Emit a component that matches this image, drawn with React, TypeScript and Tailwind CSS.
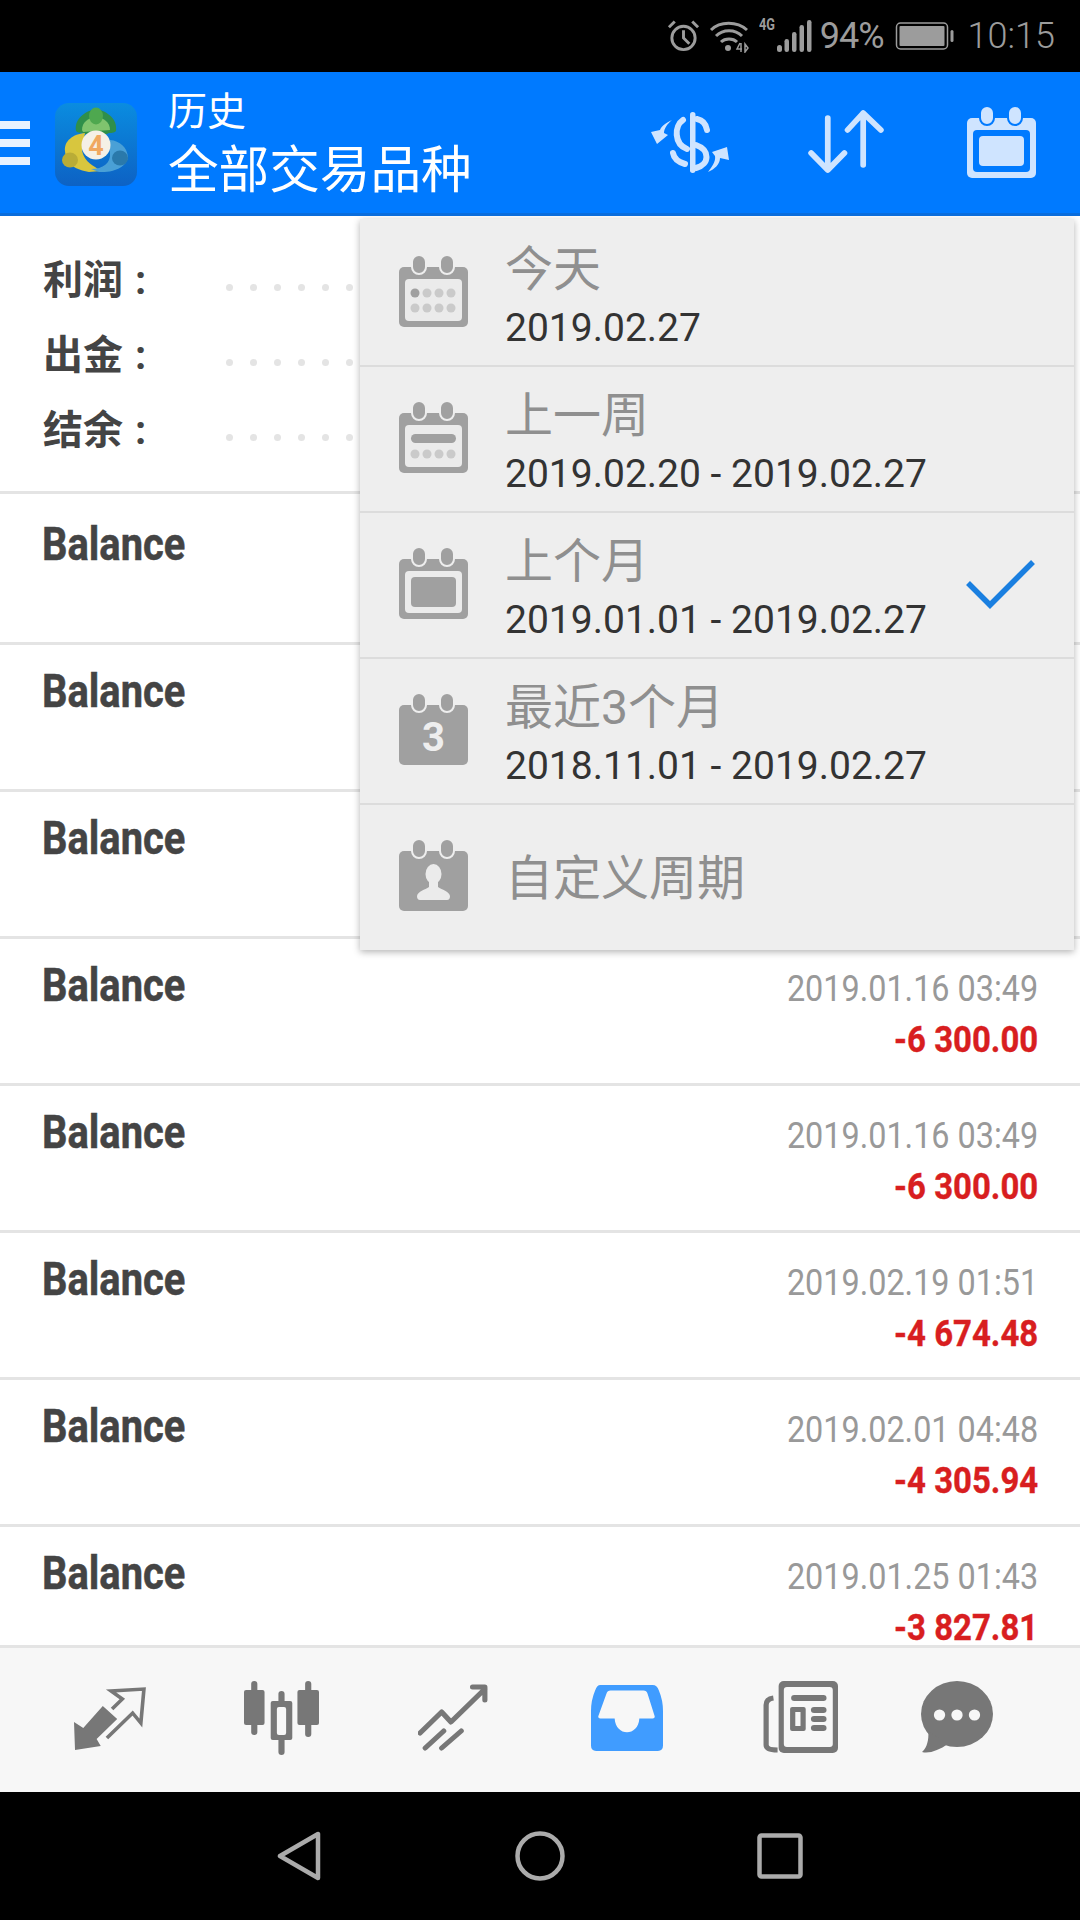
import { ReactNode } from "react";

const rows = [
  { date: "", amount: "" },
  { date: "", amount: "" },
  { date: "", amount: "" },
  { date: "2019.01.16 03:49", amount: "-6 300.00" },
  { date: "2019.01.16 03:49", amount: "-6 300.00" },
  { date: "2019.02.19 01:51", amount: "-4 674.48" },
  { date: "2019.02.01 04:48", amount: "-4 305.94" },
  { date: "2019.01.25 01:43", amount: "-3 827.81" },
];

function CalendarBase({ fill, ring, children }: { fill: string; ring: string; children?: ReactNode }) {
  return (
    <svg width="69" height="71" viewBox="0 0 69 71" className="shrink-0">
      <rect x="0" y="11" width="69" height="60" rx="5" fill={fill} />
      <rect x="13" y="-1" width="14" height="19" rx="7" fill={fill} stroke={ring} strokeWidth="2" />
      <rect x="41" y="-1" width="14" height="19" rx="7" fill={fill} stroke={ring} strokeWidth="2" />
      {children}
    </svg>
  );
}

function DotRow({ y, first }: { y: number; first?: boolean }) {
  return (
    <>
      <circle cx="16" cy={y} r="4.5" fill={first ? "#a0a0a0" : "#cacaca"} />
      <circle cx="28" cy={y} r="4.5" fill="#cacaca" />
      <circle cx="40" cy={y} r="4.5" fill="#cacaca" />
      <circle cx="52" cy={y} r="4.5" fill="#cacaca" />
    </>
  );
}

function TodayIcon() {
  return (
    <CalendarBase fill="#a0a0a0" ring="#eeeeee">
      <rect x="6" y="23" width="57" height="42" rx="4" fill="#ebebeb" />
      <DotRow y={37} first />
      <DotRow y={52} />
    </CalendarBase>
  );
}

function WeekIcon() {
  return (
    <CalendarBase fill="#a0a0a0" ring="#eeeeee">
      <rect x="6" y="23" width="57" height="42" rx="4" fill="#ebebeb" />
      <rect x="12" y="32" width="45" height="9" rx="4.5" fill="#a0a0a0" />
      <DotRow y={52} />
    </CalendarBase>
  );
}

function MonthIcon({ fill = "#a0a0a0", ring = "#eeeeee", win = "#ebebeb" }: { fill?: string; ring?: string; win?: string }) {
  return (
    <CalendarBase fill={fill} ring={ring}>
      <rect x="6" y="23" width="57" height="42" rx="4" fill={win} />
      <rect x="12" y="29" width="45" height="30" rx="4" fill={fill} />
    </CalendarBase>
  );
}

function ThreeMonthsIcon() {
  return (
    <CalendarBase fill="#a0a0a0" ring="#eeeeee">
      <text x="34.5" y="57" textAnchor="middle" fontFamily="Roboto" fontWeight="700" fontSize="40" fill="#eeeeee">
        3
      </text>
    </CalendarBase>
  );
}

function CustomIcon() {
  return (
    <CalendarBase fill="#a0a0a0" ring="#eeeeee">
      <ellipse cx="34.5" cy="34" rx="8" ry="10" fill="#ebebeb" />
      <path d="M30 42 L30 47 C26 50 19 51 18 56 Q18 60 21 60 L48 60 Q51 60 51 56 C50 51 43 50 39 47 L39 42 Z" fill="#ebebeb" />
    </CalendarBase>
  );
}

function MenuItem({ icon, title, date, checked }: { icon: ReactNode; title: string; date: string; checked?: boolean }) {
  return (
    <div className="h-[146px] flex items-start pl-[39px] pt-[20px] border-b-2 border-[#dcdcdc]">
      <div className="mt-[15px] mr-[37px]">{icon}</div>
      <div>
        <div className="text-[48px] leading-[58px] text-[#8f8f8f]">{title}</div>
        <div className="text-[39px] leading-[58px] text-[#333333]">{date}</div>
      </div>
      {checked && (
        <svg width="70" height="50" viewBox="0 0 70 50" className="ml-auto mr-[38px] mt-[26px]" fill="none" stroke="#1a7fe0" strokeWidth="5.5">
          <path d="M2 24 L24 46 L67 3" />
        </svg>
      )}
    </div>
  );
}

function DateMenu() {
  return (
    <div className="absolute left-[360px] top-[3px] w-[714px] pt-[2px] bg-[#eeeeee] shadow-[0_2px_7px_rgba(0,0,0,0.3)]">
      <MenuItem icon={<TodayIcon />} title="今天" date="2019.02.27" />
      <MenuItem icon={<WeekIcon />} title="上一周" date="2019.02.20 - 2019.02.27" />
      <MenuItem icon={<MonthIcon />} title="上个月" date="2019.01.01 - 2019.02.27" checked />
      <MenuItem icon={<ThreeMonthsIcon />} title="最近3个月" date="2018.11.01 - 2019.02.27" />
      <div className="h-[145px] flex items-center pl-[39px]">
        <div className="mb-[4px]">
          <CustomIcon />
        </div>
        <div className="ml-[37px] mt-[2px] text-[48px] leading-[60px] text-[#8f8f8f]">自定义周期</div>
      </div>
    </div>
  );
}

function StatusBar() {
  return (
    <div className="h-[72px] bg-black flex items-center justify-end pr-[25px] text-[#9c9c9c] shrink-0">
      <svg width="33" height="34" viewBox="0 0 34 34" fill="none" stroke="#9c9c9c" strokeWidth="3" className="mr-[9px]">
        <circle cx="17" cy="19" r="12" />
        <path d="M17 11 V19 L23 25 M2 8 L8 2 M32 8 L26 2" />
      </svg>
      <svg width="40" height="34" viewBox="0 0 40 34" fill="none" stroke="#9c9c9c" strokeWidth="3" className="mr-[10px]">
        <path d="M2 11 C11 2 28 2 38 11 M7 17 C14 10 26 10 33 17 M12 23 C16 19 24 19 28 23" />
        <circle cx="19" cy="29" r="3" fill="#9c9c9c" stroke="none" />
        <path d="M31 24 L28 30 H33 M32 24 V33 M36 25 V33 L39 29 Z" strokeWidth="1.5" />
      </svg>
      <div className="w-[18px] h-[30px] text-[17px] font-bold leading-[16px] self-start mt-[16px] scale-x-75 origin-left">4G</div>
      <svg width="35" height="34" viewBox="0 0 35 34" fill="#9c9c9c" className="mr-[8px]">
        <rect x="0" y="26" width="5" height="7" rx="2.5" />
        <rect x="7.5" y="20" width="4.5" height="13" rx="2.2" />
        <rect x="15" y="13" width="4.5" height="20" rx="2.2" />
        <rect x="22.5" y="6" width="4.5" height="27" rx="2.2" />
        <rect x="30" y="1" width="4.5" height="32" rx="2.2" />
      </svg>
      <div className="text-[36px] leading-[40px] tracking-[-1px] mr-[11px]">94%</div>
      <svg width="61" height="30" viewBox="0 0 60 30" className="mr-[12px]">
        <rect x="1" y="2" width="51" height="26" rx="4" fill="none" stroke="#9c9c9c" strokeWidth="1.5" />
        <rect x="4" y="5" width="45" height="20" rx="1" fill="#9c9c9c" />
        <rect x="55" y="9" width="3" height="12" rx="1.5" fill="#9c9c9c" />
      </svg>
      <div className="text-[36px] leading-[40px] font-light">10:15</div>
    </div>
  );
}

function Logo() {
  return (
    <svg width="82" height="83" viewBox="0 0 82 83" className="shrink-0">
      <defs>
        <linearGradient id="logoBg" x1="0" y1="0" x2="0" y2="1">
          <stop offset="0" stopColor="#0a8ce0" />
          <stop offset="1" stopColor="#0d62c4" />
        </linearGradient>
      </defs>
      <rect width="82" height="83" rx="14" fill="url(#logoBg)" />
      <path d="M21 28 C19 16 30 8 41 6 C52 8 63 16 61 28 C58 31 54 29 52 31 L30 31 C28 29 24 31 21 28 Z" fill="#2f8f4a" />
      <path d="M27 27 C27 19 33 15 41 14 C49 15 55 19 55 27 L28 29 Z" fill="#7fc46e" />
      <ellipse cx="41" cy="13" rx="7" ry="8.5" fill="#4ea84f" />
      <path d="M30 30 C18 31 9 38 10 48 C11 62 22 67 34 69 L46 68 C38 62 30 60 27 48 Z" fill="#d8c63e" />
      <ellipse cx="15" cy="57" rx="8" ry="7.5" fill="#b9ac37" />
      <path d="M55 37 C65 38 72 44 73 54 C72 63 60 70 44 69 L36 66 C48 66 56 60 55 50 Z" fill="#4aa0d6" />
      <ellipse cx="65" cy="55" rx="8" ry="7.5" fill="#2a79ab" />
      <circle cx="41" cy="42" r="14.5" fill="#f5f0e6" />
      <text x="41" y="52" textAnchor="middle" fontFamily="Roboto" fontWeight="700" fontSize="27" fill="#f0a860">
        4
      </text>
    </svg>
  );
}

function AppBar() {
  return (
    <div className="h-[144px] bg-[#007aff] border-b-[3px] border-[#0a6ddc] flex items-center shrink-0 text-white">
      <div className="w-[30px] flex flex-col gap-[10px] shrink-0">
        <div className="h-[8px] bg-[#e8f2ff]" />
        <div className="h-[8px] bg-[#e8f2ff]" />
        <div className="h-[8px] bg-[#e8f2ff]" />
      </div>
      <div className="ml-[25px] mt-[3px]">
        <Logo />
      </div>
      <div className="ml-[31px] pt-[3px]">
        <div className="text-[39px] leading-[50px]">历史</div>
        <div className="mt-[3px] text-[50.6px] leading-[62px]">全部交易品种</div>
      </div>
      <div className="ml-auto mr-[44px] flex items-center">
        <svg width="80" height="61" viewBox="0 0 80 61" fill="none" stroke="#cfe4ff" strokeWidth="6" strokeLinecap="round">
          <rect x="40" y="0" width="5.5" height="61" rx="2.7" fill="#cfe4ff" stroke="none" />
          <path d="M33 8 C24 14 24 32 37 37 M47 7 C52 8 56 12 57 18 M46 33 C60 38 60 52 46 56 M23 41 C24 47 28 50 35 52" />
          <path d="M22 8 C15 11 11 15 10 18 L1 20 L7 32 L18 23 L14 21 C14 17 17 12 22 8 Z M58 60 C65 57 70 52 70 46 L79 48 L77 35 L62 40 L65 44 C66 49 62 55 58 60 Z" fill="#cfe4ff" stroke="none" />
        </svg>
        <svg width="76" height="65" viewBox="0 0 73 65" preserveAspectRatio="none" fill="none" stroke="#cfe4ff" strokeWidth="5.5" strokeLinecap="round" strokeLinejoin="round" className="ml-[78px]">
          <path d="M19 8 V60 M3 43 L19 60 L35 43 M53 3 V55 M38 20 L53 3 L70 20" />
        </svg>
        <div className="ml-[83px]">
          <MonthIcon fill="#cfe4ff" ring="#007aff" win="#007aff" />
        </div>
      </div>
    </div>
  );
}

function Summary() {
  const labels = ["利润", "出金", "结余"];
  const dots = Array.from({ length: 34 });
  return (
    <div className="h-[278px] border-b-[3px] border-[#e4e4e4] pt-[27px] pl-[43px] overflow-hidden">
      {labels.map((label) => (
        <div key={label} className="h-[75px] flex items-center">
          <div className="w-[183px] shrink-0 text-[40px] font-bold text-[#444444] leading-[75px]">
            {label}
            <span className="ml-[12px]">:</span>
          </div>
          <div className="flex gap-[17px] pt-[14px]">
            {dots.map((_, i) => (
              <div key={i} className="w-[7px] h-[7px] rounded-full bg-[#e4e4e4]" />
            ))}
          </div>
        </div>
      ))}
    </div>
  );
}

function Row({ date, amount }: { date: string; amount: string }) {
  return (
    <div className="h-[147px] shrink-0 border-b-[3px] border-[#e4e4e4] flex justify-between pl-[42px] pr-[42px]">
      <div className="mt-[18px] text-[46px] leading-[56px] font-bold text-[#444444] [-webkit-text-stroke:0.5px_#444444] scale-x-[0.867] origin-left">Balance</div>
      <div className="mt-[25px] text-right">
        <div className="text-[37px] leading-[50px] text-[#999999] scale-x-[0.875] origin-right whitespace-nowrap">{date}</div>
        <div className="text-[37px] leading-[52px] font-bold text-[#d81e20] [-webkit-text-stroke:0.4px_#d81e20] scale-x-[0.89] origin-right whitespace-nowrap">{amount}</div>
      </div>
    </div>
  );
}

function TabBar() {
  return (
    <div className="h-[147px] shrink-0 bg-[#f7f7f7] border-t-[3px] border-[#e4e4e4] flex items-start pt-[36px] pl-[74px]">
      <svg width="72" height="64" viewBox="0 0 70 64" preserveAspectRatio="none" className="mt-[3px] shrink-0">
        <path d="M0 35 L9 41 L28 19 L42 32 L22 52 L26 59 L1 63 Z" fill="#777777" />
        <path d="M37 22 L47 12 L36 4 L68 2 L65 36 L57 26 L32 51" fill="none" stroke="#777777" strokeWidth="3.5" />
      </svg>
      <svg width="75" height="74" viewBox="0 0 73 74" preserveAspectRatio="none" fill="#777777" className="ml-[98px] -mt-[3px] shrink-0">
        <rect x="7" y="0" width="6" height="54" rx="3" />
        <rect x="0" y="9" width="20" height="35" rx="2" />
        <rect x="33.5" y="10" width="6" height="64" rx="3" />
        <rect x="26" y="20" width="21" height="39" rx="2" />
        <rect x="32" y="26" width="9" height="28" rx="2" fill="#f7f7f7" />
        <rect x="59.5" y="0" width="6" height="56" rx="3" />
        <rect x="52" y="9" width="21" height="35" rx="2" />
      </svg>
      <svg width="71" height="67" viewBox="0 0 69 67" preserveAspectRatio="none" fill="none" stroke="#777777" strokeWidth="5" strokeLinecap="round" strokeLinejoin="round" className="ml-[99px] shrink-0">
        <path d="M2 49 L23 28 L32 38 L65 5 M53 3 H65 V16 M7 64 L25 47 M23 64 L42 47" />
      </svg>
      <svg width="72" height="66" viewBox="0 0 70 61" preserveAspectRatio="none" className="ml-[102px] mt-[1px] shrink-0">
        <path d="M9 0 H60 Q64 0 66 5 Q70 14 70 24 V56 Q70 61 65 61 H5 Q0 61 0 56 V24 Q0 14 4 5 Q6 0 9 0 Z" fill="#409cff" />
        <path d="M19 5 H51 Q54 5 55 8 L62 29 Q62 31 60 31 H47 C46 48 24 48 23 31 H9 Q7 31 7 29 L15 8 Q16 5 19 5 Z" fill="#f7f7f7" />
      </svg>
      <svg width="75" height="72" viewBox="0 0 72 72" preserveAspectRatio="none" className="ml-[100px] -mt-[3px] shrink-0">
        <path d="M10 17 Q3 18 3 24 V64 Q3 69 14 69" fill="none" stroke="#777777" strokeWidth="5" />
        <rect x="15" y="0" width="57" height="72" rx="5" fill="#777777" />
        <rect x="20" y="6" width="47" height="60" rx="3" fill="#f7f7f7" />
        <rect x="27" y="14" width="34" height="6" rx="3" fill="#777777" />
        <rect x="26" y="26" width="15" height="24" rx="2" fill="#777777" />
        <rect x="31" y="31" width="5" height="14" fill="#f7f7f7" />
        <rect x="46" y="26" width="15" height="6" rx="3" fill="#777777" />
        <rect x="46" y="35" width="15" height="6" rx="3" fill="#777777" />
        <rect x="46" y="44" width="15" height="6" rx="3" fill="#777777" />
      </svg>
      <svg width="72" height="72" viewBox="0 0 70 72" preserveAspectRatio="none" className="ml-[83px] -mt-[3px] shrink-0">
        <ellipse cx="35" cy="33" rx="35" ry="33" fill="#777777" />
        <path d="M7 50 C8 60 5 68 1 71 C8 73 18 69 26 63 Z" fill="#777777" />
        <circle cx="18" cy="34" r="5.5" fill="#f7f7f7" />
        <circle cx="35" cy="34" r="5.5" fill="#f7f7f7" />
        <circle cx="52" cy="34" r="5.5" fill="#f7f7f7" />
      </svg>
    </div>
  );
}

function NavBar() {
  return (
    <div className="h-[128px] shrink-0 bg-black flex items-center pl-[277px]">
      <svg width="44" height="50" viewBox="0 0 44 50" fill="none" stroke="#ababab" strokeWidth="4.5" strokeLinejoin="round">
        <path d="M3 25 L41 3 V47 Z" />
      </svg>
      <svg width="50" height="50" viewBox="0 0 50 50" fill="none" stroke="#ababab" strokeWidth="4.5" className="ml-[194px]">
        <circle cx="25" cy="25" r="22.5" />
      </svg>
      <svg width="46" height="46" viewBox="0 0 46 46" fill="none" stroke="#ababab" strokeWidth="4.5" className="ml-[192px]">
        <rect x="2.5" y="2.5" width="41" height="41" rx="2" />
      </svg>
    </div>
  );
}

export default function App() {
  return (
    <div className="w-[1080px] h-[1920px] flex flex-col bg-white overflow-hidden font-['Roboto','Noto_Sans_CJK_SC',sans-serif]">
      <StatusBar />
      <AppBar />
      <div className="flex-1 relative overflow-hidden">
        <Summary />
        <div className="flex flex-col pt-[4px]">
          {rows.map((row, i) => (
            <Row key={i} date={row.date} amount={row.amount} />
          ))}
        </div>
        <DateMenu />
      </div>
      <TabBar />
      <NavBar />
    </div>
  );
}
